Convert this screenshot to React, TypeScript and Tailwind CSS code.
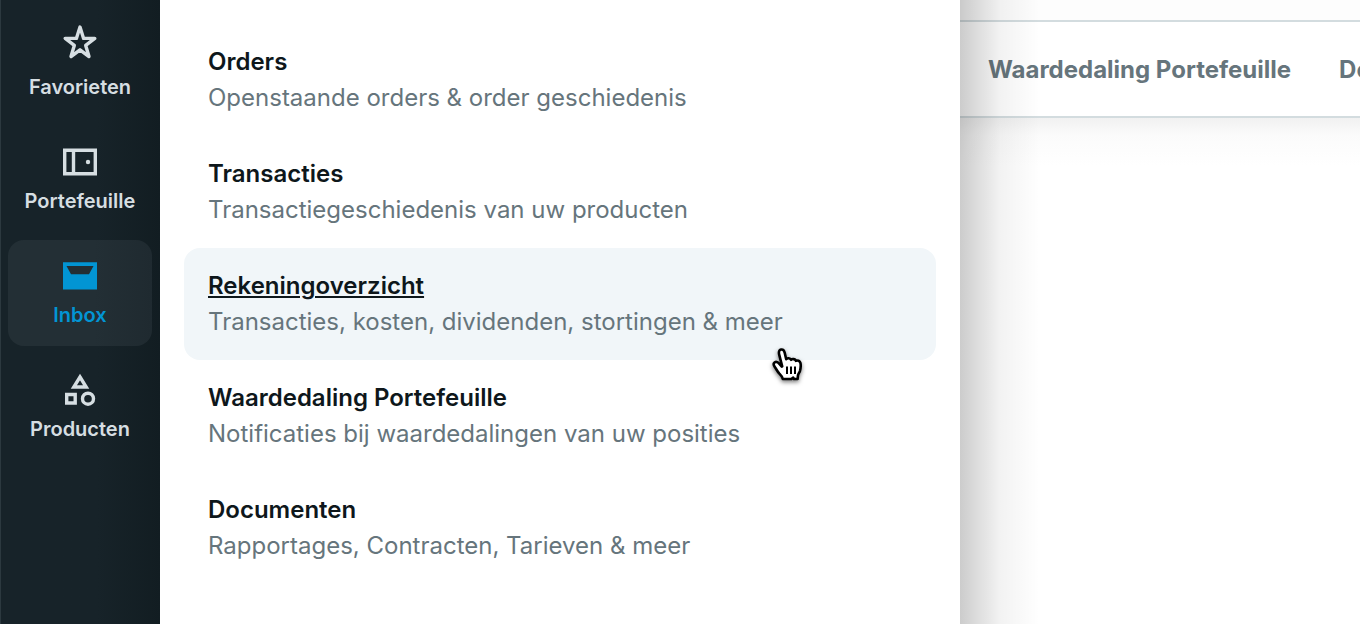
import type { ReactNode } from 'react'
import { clsx } from 'clsx'

const navItems = [
  { label: 'Favorieten', icon: <StarIcon /> },
  { label: 'Portefeuille', icon: <WalletIcon /> },
  { label: 'Inbox', icon: <InboxIcon />, active: true },
  { label: 'Producten', icon: <ShapesIcon /> },
]

const menuItems = [
  { title: 'Orders', description: 'Openstaande orders & order geschiedenis' },
  {
    title: 'Transacties',
    description: 'Transactiegeschiedenis van uw producten',
  },
  {
    title: 'Rekeningoverzicht',
    description: 'Transacties, kosten, dividenden, stortingen & meer',
    hovered: true,
  },
  {
    title: 'Waardedaling Portefeuille',
    description: 'Notificaties bij waardedalingen van uw posities',
  },
  {
    title: 'Documenten',
    description: 'Rapportages, Contracten, Tarieven & meer',
  },
]

function Icon({ children }: { children: ReactNode }) {
  return (
    <svg
      width="40"
      height="48"
      viewBox="0 -8 40 48"
      fill="none"
      stroke="currentColor"
      strokeWidth="3.4"
      aria-hidden="true"
    >
      {children}
    </svg>
  )
}

function StarIcon() {
  return (
    <Icon>
      <path
        d="M20 -1L23.6 10.4H34.8L25.7 17.4L29 28.6L20 21.8L11 28.6L14.3 17.4L5.2 10.4H16.4Z"
        strokeLinejoin="round"
      />
    </Icon>
  )
}

function WalletIcon() {
  return (
    <Icon>
      <path d="M4.7 8.2H35.3V31.8H4.7ZM13.5 8V32" />
      <circle cx="28" cy="20" r="2.2" fill="currentColor" stroke="none" />
    </Icon>
  )
}

function InboxIcon() {
  return (
    <Icon>
      <path
        d="M3 6.2H37V33.6H3ZM6.5 10L11 18.3H29L33.5 10Z"
        fill="currentColor"
        fillRule="evenodd"
        stroke="none"
      />
    </Icon>
  )
}

function ShapesIcon() {
  return (
    <Icon>
      <path d="M20 7L26.2 17H13.8ZM6.7 24.5H15.2V33H6.7Z" />
      <circle cx="28" cy="28.7" r="5.5" />
    </Icon>
  )
}

function HandCursor() {
  return (
    <svg
      className="pointer-events-none absolute right-[130px] -bottom-6 drop-shadow-[0_2px_2px_rgba(0,0,0,0.5)]"
      width="36"
      height="38"
      viewBox="0 0 36 38"
      aria-hidden="true"
    >
      <path
        d="M12.2 20.4L9.2 8.6C8.5 5.8 9.2 3.9 11 3.5C12.9 3.2 14.2 4.5 14.7 6.8L16.2 13.2C17.4 11.8 20.2 12 21 13.8C22.4 12.5 25.2 13 25.9 14.8C27.6 14 29.8 14.8 30.4 16.8C31 19.2 30.6 22.4 30 24.8C29.4 26.8 28.2 27.8 28 29.2L27.6 33H24L23.2 31.6L21.4 33H12.8C12.4 31 11.2 29.5 9.4 27.7C7.6 25.8 6.4 23.2 4.8 20.9C3.6 19.2 3.3 17.4 4.5 16.5C6 15.4 8 16.2 9.4 17.9L11.8 20.6Z"
        fill="#fff"
        stroke="#000"
        strokeWidth="2.6"
        strokeLinejoin="round"
      />
      <path
        d="M17 20.5V28M21 20.5V28M25 20.5V28"
        stroke="#000"
        strokeWidth="2"
      />
    </svg>
  )
}

function Sidebar() {
  return (
    <nav className="flex w-40 shrink-0 flex-col gap-2 border-l border-[#2c393f] bg-linear-to-r from-[#172329] from-60% to-[#121d22] py-3 pr-2 pl-[7px]">
      {navItems.map((item) => (
        <a
          key={item.label}
          href="#"
          className={clsx(
            'flex flex-col items-center gap-1 rounded-2xl px-1 pt-2 pb-4 text-xl leading-[30px] font-semibold',
            item.active
              ? 'bg-linear-to-r from-[#232f35] from-60% to-[#1f2a30] text-[#0295d4]'
              : 'text-[#d6dee2]',
          )}
        >
          {item.icon}
          {item.label}
        </a>
      ))}
    </nav>
  )
}

function InboxMenu() {
  return (
    <section
      aria-label="Inbox"
      className="relative z-10 w-[800px] shrink-0 bg-white px-6 py-6"
    >
      <ul>
        {menuItems.map((item) => (
          <li key={item.title} className="relative">
            <a
              href="#"
              className={clsx(
                'block rounded-2xl px-6 py-5 text-2xl leading-9',
                item.hovered && 'bg-[#f1f6f9]',
              )}
            >
              <span
                className={clsx(
                  'block font-semibold text-[#0e171b]',
                  item.hovered && 'underline decoration-2 underline-offset-2',
                )}
              >
                {item.title}
              </span>
              <span className="block text-[#66757c]">{item.description}</span>
            </a>
            {item.hovered && <HandCursor />}
          </li>
        ))}
      </ul>
      {/* shadow cast on the page behind the menu */}
      <div className="pointer-events-none absolute inset-y-0 left-full w-20 bg-linear-to-r from-black/20 via-black/5 via-50% to-transparent" />
    </section>
  )
}

export default function App() {
  return (
    <div className="flex min-h-screen overflow-hidden bg-white font-['Inter',sans-serif]">
      <Sidebar />
      <InboxMenu />
      <main className="min-w-0 flex-1 overflow-hidden">
        <div className="h-5 bg-[#fdfdfd]" />
        <nav className="flex gap-12 border-y-2 border-[#d3dcdf] bg-white px-7 pt-7 pb-6.5 text-2xl leading-10 font-bold whitespace-nowrap text-[#66757c]">
          <a href="#">Waardedaling Portefeuille</a>
          <a href="#">Documenten</a>
        </nav>
        <div className="h-12 bg-linear-to-b from-[#f1f1f1] via-[#fbfbfb] via-35% to-white" />
      </main>
    </div>
  )
}
